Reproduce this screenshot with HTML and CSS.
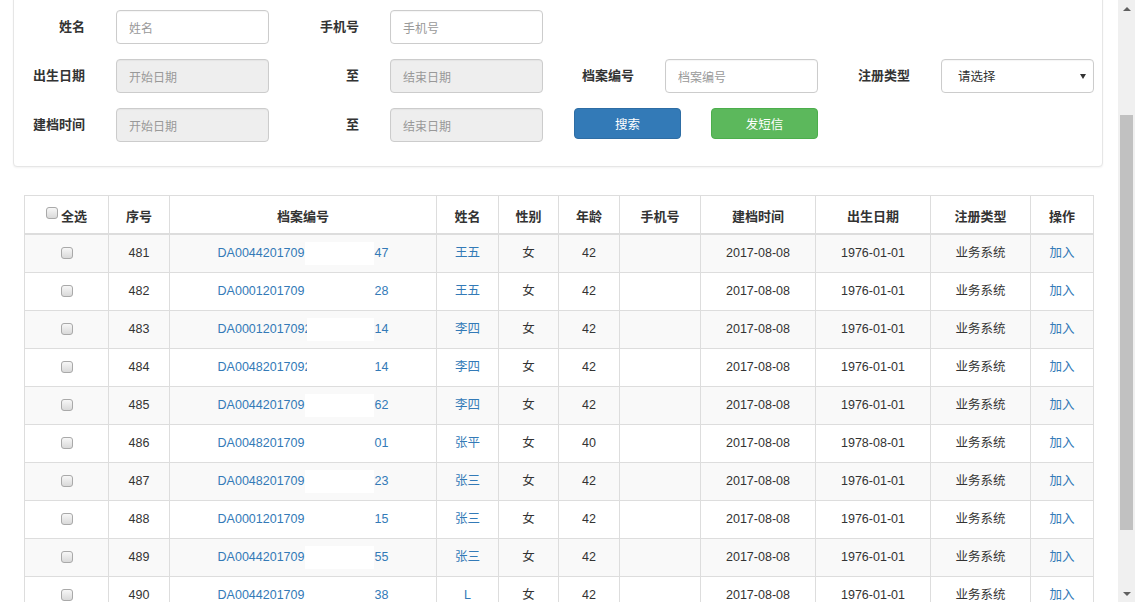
FILE: index.html
```html
<!DOCTYPE html>
<html lang="zh-CN">
<head>
<meta charset="utf-8">
<title>档案列表</title>
<link rel="stylesheet" href="styles.css">
</head>
<body>
<div class="app">
  <div class="main">
    <div class="panel">
      <div class="form">
        <div class="form-row">
          <label class="lbl">姓名</label>
          <input class="ctl" type="text" placeholder="姓名">
          <label class="lbl">手机号</label>
          <input class="ctl" type="text" placeholder="手机号">
        </div>
        <div class="form-row">
          <label class="lbl">出生日期</label>
          <input class="ctl" type="text" placeholder="开始日期" disabled>
          <label class="lbl">至</label>
          <input class="ctl" type="text" placeholder="结束日期" disabled>
          <label class="lbl">档案编号</label>
          <input class="ctl" type="text" placeholder="档案编号">
          <label class="lbl">注册类型</label>
          <div class="select-wrap">
            <select class="ctl sel"><option>请选择</option></select>
          </div>
        </div>
        <div class="form-row">
          <label class="lbl">建档时间</label>
          <input class="ctl" type="text" placeholder="开始日期" disabled>
          <label class="lbl">至</label>
          <input class="ctl" type="text" placeholder="结束日期" disabled>
          <div class="btns">
            <button class="btn btn-primary" type="button">搜索</button>
            <button class="btn btn-success" type="button">发短信</button>
          </div>
        </div>
      </div>
    </div>

    <table class="grid">
      <colgroup>
        <col style="width:84px"><col style="width:61px"><col style="width:267px"><col style="width:62px">
        <col style="width:60px"><col style="width:61px"><col style="width:81px"><col style="width:115px">
        <col style="width:115px"><col style="width:100px"><col style="width:63px">
      </colgroup>
      <thead>
        <tr>
          <th><input type="checkbox" class="chk chk-head"><span>全选</span></th>
          <th>序号</th><th>档案编号</th><th>姓名</th><th>性别</th><th>年龄</th><th>手机号</th>
          <th>建档时间</th><th>出生日期</th><th>注册类型</th><th>操作</th>
        </tr>
      </thead>
      <tbody>
        <tr>
          <td><input type="checkbox" class="chk"></td><td>481</td>
          <td><a class="lnk">DA0044201709<span class="mask"></span>47</a></td>
          <td><a class="lnk">王五</a></td><td>女</td><td>42</td><td></td><td>2017-08-08</td><td>1976-01-01</td><td>业务系统</td><td><a class="lnk">加入</a></td>
        </tr>
        <tr>
          <td><input type="checkbox" class="chk"></td><td>482</td>
          <td><a class="lnk">DA0001201709<span class="mask"></span>28</a></td>
          <td><a class="lnk">王五</a></td><td>女</td><td>42</td><td></td><td>2017-08-08</td><td>1976-01-01</td><td>业务系统</td><td><a class="lnk">加入</a></td>
        </tr>
        <tr>
          <td><input type="checkbox" class="chk"></td><td>483</td>
          <td><a class="lnk">DA0001201709<span class="cut">2</span><span class="mask mask-short"></span>14</a></td>
          <td><a class="lnk">李四</a></td><td>女</td><td>42</td><td></td><td>2017-08-08</td><td>1976-01-01</td><td>业务系统</td><td><a class="lnk">加入</a></td>
        </tr>
        <tr>
          <td><input type="checkbox" class="chk"></td><td>484</td>
          <td><a class="lnk">DA0048201709<span class="cut">2</span><span class="mask mask-short"></span>14</a></td>
          <td><a class="lnk">李四</a></td><td>女</td><td>42</td><td></td><td>2017-08-08</td><td>1976-01-01</td><td>业务系统</td><td><a class="lnk">加入</a></td>
        </tr>
        <tr>
          <td><input type="checkbox" class="chk"></td><td>485</td>
          <td><a class="lnk">DA0044201709<span class="mask"></span>62</a></td>
          <td><a class="lnk">李四</a></td><td>女</td><td>42</td><td></td><td>2017-08-08</td><td>1976-01-01</td><td>业务系统</td><td><a class="lnk">加入</a></td>
        </tr>
        <tr>
          <td><input type="checkbox" class="chk"></td><td>486</td>
          <td><a class="lnk">DA0048201709<span class="mask"></span>01</a></td>
          <td><a class="lnk">张平</a></td><td>女</td><td>40</td><td></td><td>2017-08-08</td><td>1978-08-01</td><td>业务系统</td><td><a class="lnk">加入</a></td>
        </tr>
        <tr>
          <td><input type="checkbox" class="chk"></td><td>487</td>
          <td><a class="lnk">DA0048201709<span class="mask"></span>23</a></td>
          <td><a class="lnk">张三</a></td><td>女</td><td>42</td><td></td><td>2017-08-08</td><td>1976-01-01</td><td>业务系统</td><td><a class="lnk">加入</a></td>
        </tr>
        <tr>
          <td><input type="checkbox" class="chk"></td><td>488</td>
          <td><a class="lnk">DA0001201709<span class="mask"></span>15</a></td>
          <td><a class="lnk">张三</a></td><td>女</td><td>42</td><td></td><td>2017-08-08</td><td>1976-01-01</td><td>业务系统</td><td><a class="lnk">加入</a></td>
        </tr>
        <tr>
          <td><input type="checkbox" class="chk"></td><td>489</td>
          <td><a class="lnk">DA0044201709<span class="mask"></span>55</a></td>
          <td><a class="lnk">张三</a></td><td>女</td><td>42</td><td></td><td>2017-08-08</td><td>1976-01-01</td><td>业务系统</td><td><a class="lnk">加入</a></td>
        </tr>
        <tr>
          <td><input type="checkbox" class="chk"></td><td>490</td>
          <td><a class="lnk">DA0044201709<span class="mask"></span>38</a></td>
          <td><a class="lnk">L</a></td><td>女</td><td>42</td><td></td><td>2017-08-08</td><td>1976-01-01</td><td>业务系统</td><td><a class="lnk">加入</a></td>
        </tr>
      </tbody>
    </table>
  </div>

  <div class="scrollbar">
    <div class="sb-btn"><span class="arrow-up"></span></div>
    <div class="sb-track"><div class="sb-thumb"></div></div>
    <div class="sb-btn"><span class="arrow-down"></span></div>
  </div>
</div>
</body>
</html>
```

FILE: styles.css
```css
html, body {
  margin: 0;
  padding: 0;
  background: #fff;
  overflow: hidden;
}

body {
  font-family: "Liberation Sans", "Noto Sans CJK SC", sans-serif;
  font-size: 12.5px;
  color: #333;
}

.app {
  display: flex;
  height: 602px;
  overflow: hidden;
}

.main {
  flex: 1;
  min-width: 0;
}

/* ---------- search panel ---------- */
.panel {
  margin: -20px 15px 0 13px;
  padding: 29px 0 24px 0;
  border: 1px solid #e6e6e6;
  border-radius: 4px;
  box-shadow: 0 1px 2px rgba(0, 0, 0, 0.05);
  background: #fff;
}

.form {
  display: flex;
  flex-direction: column;
  gap: 15px;
}

.form-row {
  display: grid;
  grid-template-columns: 71px 153px 59px 153px 60px 153px 61px 153px;
  column-gap: 31px;
  align-items: center;
  height: 34px;
}

.lbl {
  text-align: right;
  font-weight: 700;
  font-size: 13px;
  color: #333;
  white-space: nowrap;
  line-height: 20px;
  margin-top: 0;
}

.ctl {
  box-sizing: border-box;
  width: 153px;
  height: 34px;
  padding: 8px 12px 4px 12px;
  border: 1px solid #ccc;
  border-radius: 4px;
  background: #fff;
  font-family: "Liberation Sans", "Noto Sans CJK SC", sans-serif;
  font-size: 12px;
  color: #555;
  box-shadow: inset 0 1px 1px rgba(0, 0, 0, 0.04);
  outline: none;
}

.ctl::placeholder {
  color: #999;
}

.ctl:disabled {
  background: #eee;
}

.select-wrap {
  position: relative;
  width: 153px;
  height: 34px;
}

.sel {
  -webkit-appearance: none;
  appearance: none;
  padding: 7px 12px 5px 16px;
  color: #333;
  font-size: 12.5px;
}

.select-wrap::after {
  content: "";
  position: absolute;
  right: 8px;
  top: 15px;
  border-left: 3px solid transparent;
  border-right: 3px solid transparent;
  border-top: 5px solid #333;
  pointer-events: none;
}

.btns {
  grid-column: span 2;
  display: flex;
  gap: 30px;
  align-self: start;
}

.btn {
  box-sizing: border-box;
  width: 107px;
  height: 31px;
  border-radius: 4px;
  border: 1px solid transparent;
  color: #fff;
  font-family: "Liberation Sans", "Noto Sans CJK SC", sans-serif;
  font-size: 12.5px;
  padding: 0;
  cursor: pointer;
}

.btn-primary {
  background: #337ab7;
  border-color: #2e6da4;
}

.btn-success {
  background: #5cb85c;
  border-color: #4cae4c;
}

/* ---------- table ---------- */
.grid {
  margin: 28px 25px 0 24px;
  width: 1070px;
  table-layout: fixed;
  border-collapse: collapse;
}

.grid th,
.grid td {
  border: 1px solid #ddd;
  padding: 8px 4px;
  height: 21px;
  line-height: 21px;
  text-align: center;
  white-space: nowrap;
  overflow: hidden;
}

.grid th {
  font-weight: 700;
  font-size: 13px;
  color: #333;
  padding: 10px 4px 6px 4px;
  border-bottom: 2px solid #ddd;
}

.grid tbody tr:nth-child(odd) {
  background: #f9f9f9;
}

.lnk {
  color: #337ab7;
  text-decoration: none;
}

.mask {
  display: inline-block;
  width: 69px;
  height: 21px;
  margin-left: 1px;
  background: #fff;
  vertical-align: top;
  box-shadow: 0 -1px 0 #fff, 0 1px 0 #fff;
}

.mask-short {
  width: 67px;
  margin-left: 0;
}

.cut {
  display: inline-block;
  width: 3px;
  height: 21px;
  overflow: hidden;
  vertical-align: top;
}

.chk {
  -webkit-appearance: none;
  appearance: none;
  box-sizing: border-box;
  width: 12px;
  height: 12px;
  margin: 0;
  border: 1px solid #a9a9a9;
  border-radius: 3px;
  background: linear-gradient(#f7f7f7, #d9d9d9);
  vertical-align: middle;
  margin-top: -2px;
}

.chk-head {
  vertical-align: top;
  margin-top: 1px;
  margin-right: 3px;
}

/* ---------- fake window scrollbar ---------- */
.scrollbar {
  width: 17px;
  flex: none;
  height: 602px;
  background: #f0f0f0;
  display: flex;
  flex-direction: column;
}

.sb-btn {
  height: 17px;
  display: flex;
  align-items: center;
  justify-content: center;
}

.arrow-up {
  border-left: 4px solid transparent;
  border-right: 4px solid transparent;
  border-bottom: 4px solid #606060;
}

.arrow-down {
  border-left: 4px solid transparent;
  border-right: 4px solid transparent;
  border-top: 4px solid #606060;
}

.sb-track {
  flex: 1;
  padding: 98px 2px 0 2px;
}

.sb-thumb {
  height: 415px;
  background: #c1c1c1;
}
```
